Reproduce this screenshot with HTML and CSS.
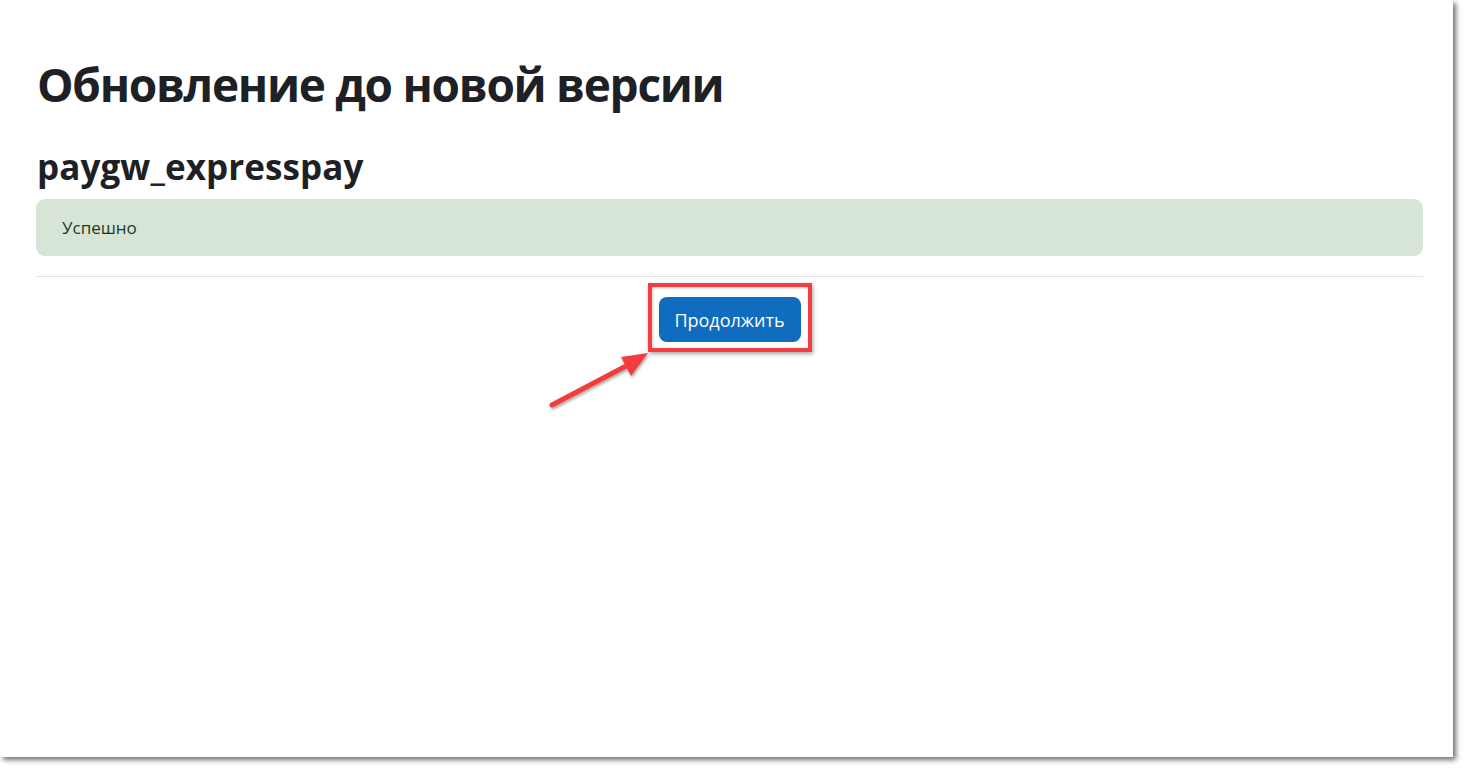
FILE: index.html
```html
<!DOCTYPE html>
<html lang="ru">
<head>
<meta charset="utf-8">
<title>Обновление до новой версии</title>
<link rel="stylesheet" href="styles.css">
</head>
<body>
<div class="page">
  <div class="frame">
    <main class="content">
      <h1 class="title">Обновление до новой версии</h1>
      <h2 class="plugin">paygw_expresspay</h2>
      <div class="alert">Успешно</div>
      <hr class="divider">
      <div class="actions">
        <div class="btn-wrap">
          <button class="btn">Продолжить</button>
          <span class="highlight"></span>
        </div>
      </div>
    </main>
    <svg class="arrow" width="120" height="80" viewBox="0 0 120 80">
      <defs>
        <filter id="sh" x="-20%" y="-20%" width="140%" height="140%">
          <feDropShadow dx="1" dy="2" stdDeviation="1.5" flood-color="#000" flood-opacity="0.35"/>
        </filter>
      </defs>
      <g filter="url(#sh)">
        <line x1="12" y1="65" x2="88" y2="25" stroke="#f23c3c" stroke-width="5" stroke-linecap="round"/>
        <polygon points="108,13 81,17 91,36" fill="#f23c3c"/>
      </g>
    </svg>
  </div>
</div>
</body>
</html>
```
FILE: styles.css
```css
html, body {
  margin: 0;
  padding: 0;
  background: #fff;
}
body {
  font-family: "Open Sans", "Noto Sans", sans-serif;
  color: #1d2125;
}
.page {
  padding-bottom: 16px;
}
.frame {
  position: relative;
  width: 1453px;
  height: 757px;
  background: #fff;
  box-shadow: 3px 3px 5px rgba(0, 0, 0, 0.55);
}
.content {
  padding: 56px 30px 0 36px;
}
.title {
  margin: 0;
  font-size: 46px;
  font-weight: 700;
  line-height: 56px;
  letter-spacing: -1.3px;
  padding-left: 1px;
}
.plugin {
  margin: 34px 0 0 0;
  font-size: 35px;
  font-weight: 700;
  line-height: 42px;
  letter-spacing: 0.1px;
  padding-left: 1px;
}
.alert {
  margin-top: 11px;
  height: 57px;
  box-sizing: border-box;
  padding: 0 26px;
  display: flex;
  align-items: center;
  background: #d7e5d7;
  border-radius: 9px;
  color: #1d3a1d;
  font-size: 17px;
}
.divider {
  margin: 20px 0 0 0;
  border: 0;
  border-top: 1px solid #e3e3e3;
}
.actions {
  display: flex;
  justify-content: center;
  padding-top: 20px;
}
.btn-wrap {
  position: relative;
}
.btn {
  display: block;
  width: 142px;
  height: 45px;
  border: 0;
  border-radius: 8px;
  background: #0f6cbf;
  color: #fff;
  font-family: "Open Sans", "Noto Sans", sans-serif;
  font-size: 18px;
  padding: 0;
}
.highlight {
  position: absolute;
  left: -11px;
  top: -14px;
  right: -11px;
  bottom: -10px;
  border: 4px solid #f43d42;
  box-shadow: 1px 2px 4px rgba(0, 0, 0, 0.35), inset 1px 1px 3px rgba(0, 0, 0, 0.2);
  pointer-events: none;
}
.arrow {
  position: absolute;
  left: 540px;
  top: 340px;
}
```
